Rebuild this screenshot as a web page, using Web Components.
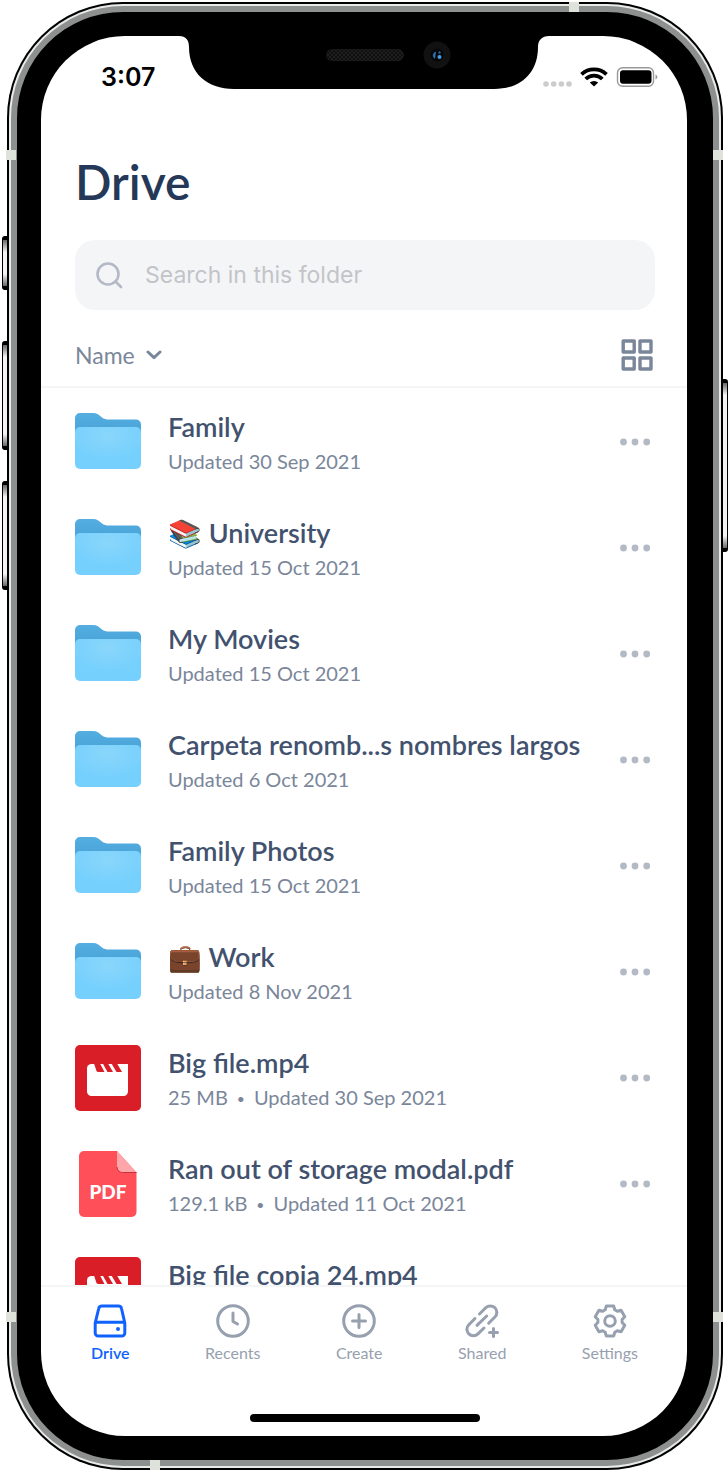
<!DOCTYPE html>
<html lang="en">
<head>
<meta charset="utf-8">
<meta name="viewport" content="width=device-width, initial-scale=1">
<title>Drive</title>
<style>
  html, body { margin: 0; height: 100%; }
  body {
    box-sizing: border-box;
    padding: 12px 15px 12px 17px;
    background: #fff;
    font-family: Lato, "Liberation Sans", sans-serif;
    --ink: #253858;
    --name: #42526e;
    --muted: #7a869a;
    --faint: #97a0af;
    --accent: #0f62fe;
    --line: #f4f5f7;
    --ui: Inter, "Liberation Sans", sans-serif;
  }
</style>
</head>
<body>
<phone-frame>
  <status-bar slot="status"></status-bar>
  <drive-screen></drive-screen>
</phone-frame>

<script>
const define = (name, html, setup) => {
  const template = document.createElement('template');
  template.innerHTML = html;
  customElements.define(name, class extends HTMLElement {
    constructor() {
      super();
      this.attachShadow({ mode: 'open' }).append(template.content.cloneNode(true));
    }
    connectedCallback() { if (setup) setup(this, this.shadowRoot); }
  });
};

/* ---------- device ---------- */
define('phone-frame', `
<style>
  :host { display: block; position: relative; height: 100%; }
  .body {
    box-sizing: border-box; position: relative; height: 100%;
    border: 24px solid #000; border-right-width: 26px; border-radius: 106px;
    background: #000;
    box-shadow: 0 0 0 6px #8e9090, 0 0 0 8px #e9ebe9, 0 0 0 10px #000;
  }
  .screen {
    display: flex; flex-direction: column; height: 100%;
    background: #fff; border-radius: 84px; overflow: hidden;
  }
  .notch { position: absolute; top: 0; left: 50%; margin-left: -185px; width: 370px; height: 54px; }
  .band { position: absolute; background: #dfe1db; width: 10px; height: 10px; }
  .key { position: absolute; box-sizing: border-box; width: 6px; border: 1px solid #000; border-width: 4px 1px;
         background: linear-gradient(#666, #f4f4f4 12px, #f4f4f4 calc(100% - 12px), #666); }
  .l { left: -15px; border-radius: 3px 0 0 3px; }
  .r { right: -15px; border-radius: 0 3px 3px 0; }
</style>
<div class="key l" style="top:224px;height:54px"></div>
<div class="key l" style="top:329px;height:109px"></div>
<div class="key l" style="top:469px;height:109px"></div>
<div class="key r" style="top:367px;height:173px"></div>
<div class="body">
  <div class="screen"><slot name="status"></slot><slot></slot></div>
  <svg class="notch" viewBox="0 0 370 54" aria-hidden="true">
    <defs><pattern id="mesh" width="4" height="4" patternUnits="userSpaceOnUse">
      <rect width="4" height="4" fill="#1f1f1f"/><circle cx="1" cy="1" r="1" fill="#080808"/><circle cx="3" cy="3" r="1" fill="#080808"/>
    </pattern></defs>
    <path d="M0 -1H370V0C363 0 359 4 359 11C359 37 342 53 315 53H55C28 53 10 37 10 11C10 4 7 0 0 0Z"/>
    <rect x="147" y="13" width="78" height="12" rx="6" fill="url(#mesh)"/>
    <circle cx="258" cy="19" r="13.5" fill="#111"/>
    <circle cx="258" cy="19" r="6.5" fill="#05070b"/>
    <path d="M257 15.500A4 4 0 0 0 256 23Z" fill="#2f6fa8"/>
    <circle cx="260.500" cy="21" r="2" fill="#4a9be0"/>
    <circle cx="260.500" cy="16.500" r="1.200" fill="#2b5f92"/>
  </svg>
</div>
<div class="band" style="top:-10px;right:134px"></div>
<div class="band" style="bottom:-10px;left:133px"></div>
<div class="band" style="top:138px;left:-11px"></div>
<div class="band" style="top:138px;right:-10px"></div>
<div class="band" style="bottom:138px;left:-11px"></div>
<div class="band" style="bottom:138px;right:-10px"></div>
`);

define('status-bar', `
<style>
  :host { display: flex; align-items: center; height: 82px; padding: 0 29px 0 60px;
          justify-content: space-between; flex: none; box-sizing: border-box; color: #000; }
  time { font: 600 25px/32px var(--ui); }
  svg { display: block; }
</style>
<time>3:07</time>
<svg width="116" height="24" viewBox="0 0 116 24" aria-hidden="true">
  <g fill="#ccc"><circle cx="4" cy="19" r="2.8"/><circle cx="11.700" cy="19" r="2.8"/><circle cx="19.400" cy="19" r="2.800"/><circle cx="27" cy="19" r="2.8"/></g>
  <g fill="none" stroke="#000" stroke-width="3.800">
    <path d="M39.500 9.300A18.400 18.400 0 0 1 64.500 9.300"/><path d="M43.700 14A12 12 0 0 1 60.300 14"/>
  </g>
  <path d="M52 21.500L47.800 17.600A6.300 6.300 0 0 1 56.200 17.600Z"/>
  <rect x="75.500" y="2.700" width="36" height="18.500" rx="5" fill="none" stroke="#999" stroke-width="1.400"/>
  <rect x="78" y="5.200" width="31.500" height="13.500" rx="3"/>
  <path d="M113.500 9.500C116 10.500 116 13.500 113.500 14.500Z" fill="#999"/>
</svg>
`);

/* ---------- screen ---------- */
define('drive-screen', `
<style>
  :host { display: flex; flex-direction: column; flex: 1; min-height: 0; }
  header { padding: 34px 32px 0 34px; flex: none; }
  h1 { margin: 0 0 28px; font-size: 48px; line-height: 60px; font-weight: 600; color: var(--ink); }
  ul { flex: 1; min-height: 0; overflow: hidden; margin: 0; padding: 1px 0 0; list-style: none; }
</style>
<header><h1>Drive</h1><search-field></search-field></header>
<sort-bar></sort-bar>
<ul>
  <li><file-row kind="folder" name="Family" meta="Updated 30 Sep 2021"></file-row></li>
  <li><file-row kind="folder" name="📚 University" meta="Updated 15 Oct 2021"></file-row></li>
  <li><file-row kind="folder" name="My Movies" meta="Updated 15 Oct 2021"></file-row></li>
  <li><file-row kind="folder" name="Carpeta renomb...s nombres largos" meta="Updated 6 Oct 2021"></file-row></li>
  <li><file-row kind="folder" name="Family Photos" meta="Updated 15 Oct 2021"></file-row></li>
  <li><file-row kind="folder" name="💼 Work" meta="Updated 8 Nov 2021"></file-row></li>
  <li><file-row kind="video" name="Big file.mp4" size="25 MB" meta="Updated 30 Sep 2021"></file-row></li>
  <li><file-row kind="pdf" name="Ran out of storage modal.pdf" size="129.1 kB" meta="Updated 11 Oct 2021"></file-row></li>
  <li><file-row kind="video" name="Big file copia 24.mp4"></file-row></li>
</ul>
<tab-bar></tab-bar>
`);

define('search-field', `
<style>
  :host { display: block; }
  label { display: flex; align-items: center; gap: 22px; height: 70px; padding: 0 20px;
          background: #f4f5f7; border-radius: 20px; }
  svg { flex: none; display: block; }
  input { flex: 1; min-width: 0; border: 0; padding: 0; outline: 0; background: none;
          font: 400 23px/30px var(--ui); color: var(--name); }
  input::placeholder { color: #c2c4c7; opacity: 1; }
</style>
<label>
  <svg width="28" height="28" viewBox="0 0 28 28" fill="none" stroke="#b3bac5" stroke-width="2.600" stroke-linecap="round" aria-hidden="true">
    <circle cx="13" cy="13" r="10.500"/><path d="M20.500 20.500L26 26"/>
  </svg>
  <input type="search" placeholder="Search in this folder" aria-label="Search in this folder">
</label>
`);

define('sort-bar', `
<style>
  :host { display: flex; align-items: center; justify-content: space-between; box-sizing: border-box;
          height: 78px; flex: none; padding: 14px 32px 0 34px; border-bottom: 2px solid var(--line); }
  .sort { display: grid; align-items: center; color: var(--muted); }
  .sort > * { grid-area: 1 / 1; }
  select { appearance: none; border: 0; background: none; padding: 0 27px 0 0; margin: 0; field-sizing: content;
           font: 400 23px/30px Lato, "Liberation Sans", sans-serif; color: inherit; }
  .sort svg { justify-self: end; pointer-events: none; }
  button { border: 0; background: none; padding: 0 2px 0 0; margin: 0; display: block; }
  svg { display: block; }
</style>
<div class="sort">
  <select aria-label="Sort by"><option>Name</option><option>Size</option><option>Date</option></select>
  <svg width="16" height="12" viewBox="0 0 16 12" fill="none" stroke="currentColor" stroke-width="3" stroke-linecap="round" stroke-linejoin="round" aria-hidden="true"><path d="M2 3L8 8.700L14 3"/></svg>
</div>
<button type="button" aria-label="Grid view">
  <svg width="32" height="32" viewBox="0 0 32 32" fill="none" stroke="#7a869a" stroke-width="3.400" stroke-linejoin="round" aria-hidden="true">
    <rect x="2.200" y="2" width="11" height="11"/><rect x="19" y="2" width="11" height="11"/>
    <rect x="2.200" y="19" width="11" height="11"/><rect x="19" y="19" width="11" height="11"/>
  </svg>
</button>
`);

const fileIcons = {
  folder: `<svg width="68" height="68" viewBox="0 1 68 68" aria-hidden="true">
    <defs><radialGradient id="g" cx=".5" cy=".2" r=".6"><stop offset="0" stop-color="#8ad6fb"/><stop offset="1" stop-color="#75d0fd"/></radialGradient>
    <linearGradient id="b" x2="0" y2="1"><stop offset="0" stop-color="#54aee0"/><stop offset=".4" stop-color="#4ca6da"/></linearGradient></defs>
    <path d="M1 11a5 5 0 0 1 5-5h13c4 0 6 2 9 4.500c2 1.500 4 2 7 2h27a5 5 0 0 1 5 5V40H1Z" fill="url(#b)"/>
    <path d="M1 25a5 5 0 0 1 5-5h56a5 5 0 0 1 5 5V57a5 5 0 0 1-5 5H6a5 5 0 0 1-5-5Z" fill="url(#g)"/>
  </svg>`,
  video: `<svg width="68" height="68" viewBox="0 0 68 68" aria-hidden="true">
    <rect x="1" y="1" width="66" height="66" rx="5" fill="#da1e28"/>
    <path d="M13 24.500a4.500 4.500 0 0 1 4.500-4.500H54V47.500a4.500 4.500 0 0 1-4.500 4.500h-32a4.500 4.500 0 0 1-4.500-4.500Z" fill="#fff"/>
    <path d="M20 19.500H26L30.500 28H24.500Q23 28 22.500 27ZM28.800 19.500H34L39 28H33.500ZM37.500 19.500H43L48 28H42.500Z" fill="#da1e28"/>
  </svg>`,
  pdf: `<svg width="68" height="68" viewBox="0 0 68 68" aria-hidden="true">
    <path d="M5 6a5 5 0 0 1 5-5H43L62.500 22.500V62a5 5 0 0 1-5 5H10a5 5 0 0 1-5-5Z" fill="#ff4f58"/>
    <path d="M43 1V17a5.500 5.500 0 0 0 5.500 5.500H62.500Z" fill="#ffa6aa"/>
    <path d="M43 17a5.500 5.500 0 0 0 5.500 5.500H62.500" fill="none" stroke="#c9303a"/>
    <text x="34" y="49" text-anchor="middle" fill="#fff" font-family="Lato, sans-serif" font-size="19" font-weight="900">PDF</text>
  </svg>`
};

define('file-row', `
<style>
  :host { display: flex; align-items: center; height: 106px; padding: 0 32px 0 33px; box-sizing: border-box; }
  .icon { flex: none; margin-right: 26px; }
  .icon svg, .more svg { display: block; }
  .text { flex: 1; min-width: 0; padding-top: 4px; }
  .name, .meta { white-space: nowrap; height: 34px; line-height: 34px; }
  .name { font-size: 27px; font-weight: 600; color: var(--name); }
  .meta { font-size: 20px; color: var(--muted); }
  .size:not(:empty)::after { content: "•"; font-size: 14px; line-height: 1; margin: 0 9px; vertical-align: 1px; }
  .more { flex: none; border: 0; background: none; padding: 4px; margin: 0; }
</style>
<div class="icon"></div>
<div class="text"><div class="name"></div><div class="meta"><span class="size"></span><span class="date"></span></div></div>
<button class="more" type="button" aria-label="More actions">
  <svg width="32" height="8" viewBox="0 0 32 8" fill="#b3bac5" aria-hidden="true"><circle cx="4.500" cy="4" r="3.400"/><circle cx="16" cy="4" r="3.400"/><circle cx="27.700" cy="4" r="3.400"/></svg>
</button>
`, (el, root) => {
  root.querySelector('.icon').innerHTML = fileIcons[el.getAttribute('kind')];
  root.querySelector('.name').textContent = el.getAttribute('name');
  root.querySelector('.size').textContent = el.getAttribute('size') || '';
  root.querySelector('.date').textContent = el.getAttribute('meta') || '';
});

/* six-toothed outline round (17,17) */
const gear = 'M' + [0, 60, 120, 180, 240, 300].flatMap(a =>
  [[-23, 12.2], [-14, 15.4], [14, 15.4], [23, 12.2]].map(([d, r]) => {
    const t = (a + d) * Math.PI / 180;
    return (17 + r * Math.sin(t)).toFixed(2) + ' ' + (17 - r * Math.cos(t)).toFixed(2);
  })).join('L') + 'Z';

const tabIcons = {
  drive: '<path d="M9 2H25.500Q28 2 28.500 4.500L31.800 19V29a3 3 0 0 1-3 3H5.200a3 3 0 0 1-3-3V19L5.700 4.500Q6.200 2 9 2ZM2.500 18.300H31.500"/><circle cx="25" cy="25" r="2" fill="currentColor" stroke="none"/>',
  clock: '<circle cx="17" cy="17" r="15.300"/><path d="M17 9V17.500L21.500 20"/>',
  plus: '<circle cx="17" cy="17" r="15.300"/><path d="M17 10.500V23.500M10.500 17H23.500"/>',
  link: '<path d="M14.500 10L20.700 3.800A6.400 6.400 0 0 1 29.900 13L23.700 19.200M10 14.500L3.800 20.700A6.400 6.400 0 0 0 13 29.900L19 24M12 21.300L21.700 12M28.500 24.500V32.500M24.500 28.500H32.500"/>',
  gear: `<path d="${gear}"/><circle cx="17" cy="17" r="5.300"/>`
};

define('tab-item', `
<style>
  :host { display: block; color: var(--faint); }
  :host([active]) { color: var(--accent); font-weight: 600; }
  a { display: flex; flex-direction: column; align-items: center; gap: 4px; color: inherit; text-decoration: none;
      font-size: 16px; line-height: 22px; }
  svg { display: block; }
</style>
<a href="#"><svg width="34" height="34" viewBox="0 0 34 34" fill="none" stroke="currentColor" stroke-width="3" stroke-linecap="round" stroke-linejoin="round" aria-hidden="true"></svg><slot></slot></a>
`, (el, root) => { root.querySelector('svg').innerHTML = tabIcons[el.getAttribute('icon')]; });

define('tab-bar', `
<style>
  :host { display: flex; flex-direction: column; justify-content: space-between; align-items: center; box-sizing: border-box;
          height: 151px; flex: none; padding: 17px 49px 14px 50px; border-top: 2px solid var(--line); }
  nav { display: flex; justify-content: space-between; width: 100%; }
  .home { width: 230px; height: 8px; border-radius: 4px; background: #000; }
</style>
<nav aria-label="Main">
  <tab-item icon="drive" active>Drive</tab-item>
  <tab-item icon="clock">Recents</tab-item>
  <tab-item icon="plus">Create</tab-item>
  <tab-item icon="link">Shared</tab-item>
  <tab-item icon="gear">Settings</tab-item>
</nav>
<div class="home"></div>
`);
</script>
</body>
</html>
